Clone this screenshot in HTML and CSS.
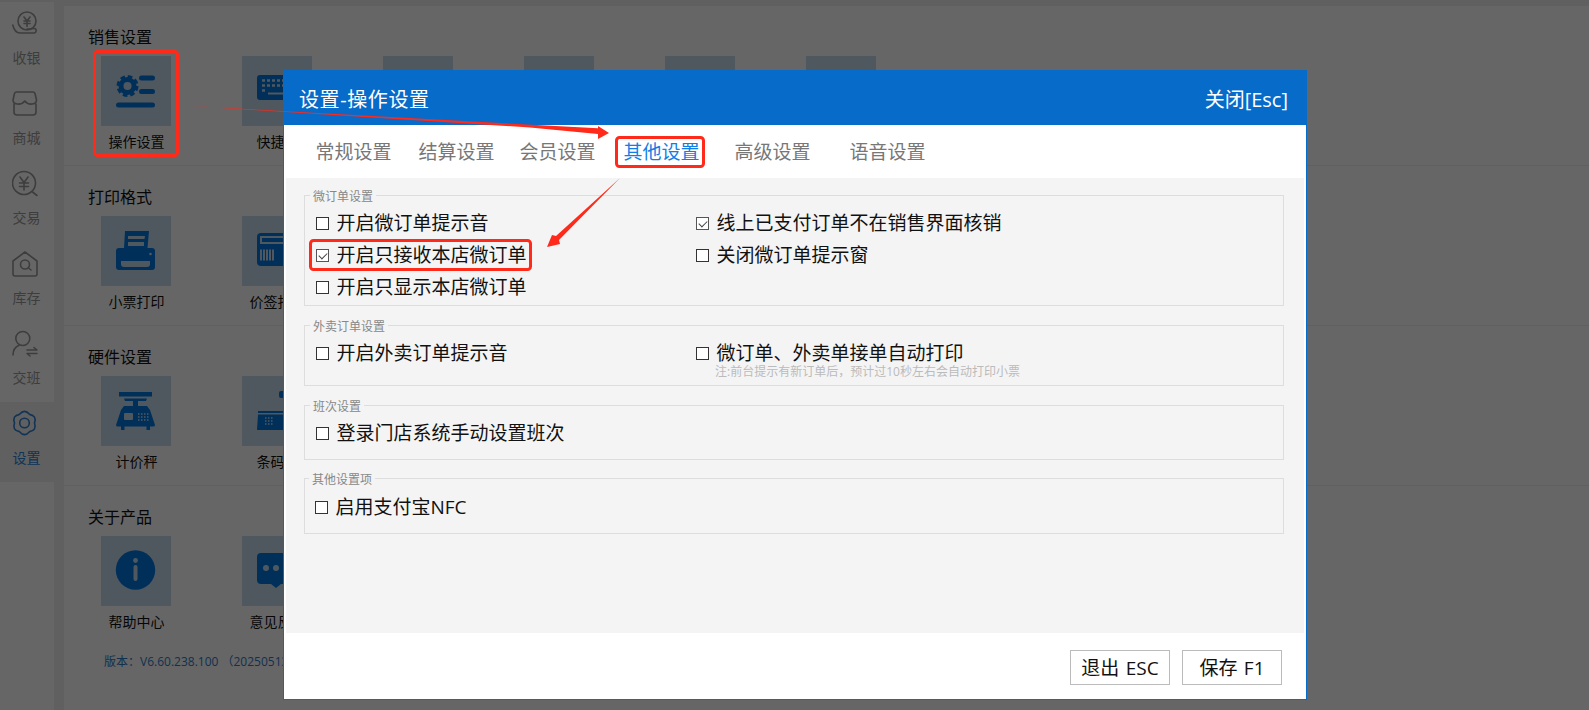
FILE: index.html
```html
<!DOCTYPE html>
<html lang="zh-CN">
<head>
<meta charset="utf-8">
<title>设置-操作设置</title>
<link rel="stylesheet" href="styles.css">
</head>
<body>
<div class="app">
  <nav class="rail">
    <a class="nav-item">
      <svg class="nav-icon" viewBox="0 0 30 30"><circle cx="15" cy="12" r="9"/><path d="M12 8 15 12l3-4M12 12h6M12 14.500h6M15 12v5.500"/><path d="M.8 16C2 21 5 24 8 24H22C24.500 24 25 19.500 22.500 19.500 20 19.500 17.500 20 15 20"/></svg>
      <span>收银</span>
    </a>
    <a class="nav-item">
      <svg class="nav-icon" viewBox="0 0 30 30"><path d="M4.500 3H21Q22.500 3 23 4.500L24.500 11C24.500 16 16 16.500 12.800 12 9.500 16.500 1 16 1 11L2.500 4.500Q3 3 4.500 3Z"/><path d="M2 15V23Q2 26 5 26H21Q24 26 24 23V15"/></svg>
      <span>商城</span>
    </a>
    <a class="nav-item">
      <svg class="nav-icon" viewBox="0 0 30 30"><circle cx="12" cy="14" r="11.500"/><path d="M20.500 23 25 26.500M8 8l4 5.500L16 8M7.500 14h9M7.500 17.500h9M12 13.500V21"/></svg>
      <span>交易</span>
    </a>
    <a class="nav-item">
      <svg class="nav-icon" viewBox="0 0 30 30"><path d="M13 3 25 12V25Q25 27 23 27H3Q1 27 1 25V12Z"/><circle cx="13" cy="15.500" r="4.500"/><path d="M16.500 19 19 21"/></svg>
      <span>库存</span>
    </a>
    <a class="nav-item">
      <svg class="nav-icon" viewBox="0 0 30 30"><circle cx="10.800" cy="9.500" r="7"/><path d="M1 26C1 20 4 17.500 7 16.200M15 21H25L22 18.500M25 24.500H15L18 27"/></svg>
      <span>交班</span>
    </a>
    <a class="nav-item nav-item-active">
      <svg class="nav-icon" viewBox="0 0 30 30"><path d="M7.500 5.340Q12.500-.5 17.500 5.340 25 6.750 22.500 14 25 21.250 17.500 22.660 12.500 28.500 7.500 22.660 0 21.250 2.500 14 0 6.750 7.500 5.340Z"/><circle cx="12.500" cy="14" r="4.800"/></svg>
      <span>设置</span>
    </a>
  </nav>

  <main class="main">
    <section class="group">
      <h2 class="group-title">销售设置</h2>
      <div class="tiles">
        <div class="tile">
          <div class="tile-box">
            <svg class="tile-icon" viewBox="0 0 70 70"><circle class="stroke-thin" cx="26.500" cy="30" r="9.500" stroke-dasharray="4.600 2.860"/><circle class="stroke-main" cx="26.500" cy="30" r="6.500"/><path class="stroke-bar" d="M40.500 22H51.500M40.500 35.500H51.500M17.500 49H51.500"/></svg>
          </div>
          <span class="tile-label">操作设置</span>
        </div>
        <div class="tile">
          <div class="tile-box">
            <svg class="tile-icon" viewBox="0 0 70 70"><rect class="fill-main" x="15" y="19" width="39" height="25" rx="3"/><path class="cut-dots" d="M20 24.500H49M20 29.500H49M20 34.500H23"/><path class="cut-line" d="M26 37.500H48"/></svg>
          </div>
          <span class="tile-label">快捷键</span>
        </div>
        <div class="tile"><div class="tile-box"></div></div>
        <div class="tile"><div class="tile-box"></div></div>
        <div class="tile"><div class="tile-box"></div></div>
        <div class="tile"><div class="tile-box"></div></div>
      </div>
    </section>

    <section class="group">
      <h2 class="group-title">打印格式</h2>
      <div class="tiles">
        <div class="tile">
          <div class="tile-box">
            <svg class="tile-icon" viewBox="0 0 70 70"><path class="fill-main" d="M24 15H48L46.500 32H23Z"/><path class="cut-solid" d="M27 20H44L43.500 23H27ZM27 26H43V30H27Z"/><rect class="fill-main" x="15" y="32" width="39" height="22" rx="3"/><path class="cut-solid" d="M20 45H49V48Q49 51 46 51H23Q20 51 20 48Z"/><circle class="cut-solid" cx="49.500" cy="38" r="1.300"/></svg>
          </div>
          <span class="tile-label">小票打印</span>
        </div>
        <div class="tile">
          <div class="tile-box">
            <svg class="tile-icon" viewBox="0 0 70 70"><rect class="fill-main" x="15" y="17" width="39" height="33" rx="4"/><path class="cut-solid" d="M18 20H51V28H18Z"/><path class="fill-main" d="M20 22H49V26H20Z"/><path class="cut-bars" d="M18 39H33"/></svg>
          </div>
          <span class="tile-label">价签打印</span>
        </div>
      </div>
    </section>

    <section class="group">
      <h2 class="group-title">硬件设置</h2>
      <div class="tiles">
        <div class="tile">
          <div class="tile-box">
            <svg class="tile-icon" viewBox="0 0 70 70"><path class="fill-main" d="M18 16H51V20.500H18ZM23 22.500H46L45 25H37V30H46L49 34 54 49Q54 50.500 52 50.500H49V54H45.500V50.500H23.500V54H20V50.500H17Q15 50.500 15 49L20 34 23 30H32V25H24Z"/><rect class="cut-solid" x="23" y="37" width="9" height="7" rx="1"/><path class="cut-dots-small" d="M37 38H48M37 41H48M37 44H48"/></svg>
          </div>
          <span class="tile-label">计价秤</span>
        </div>
        <div class="tile">
          <div class="tile-box">
            <svg class="tile-icon" viewBox="0 0 70 70"><path class="fill-main" d="M16 35H41V37H16ZM16 38.500H41V54H15Z"/><rect class="fill-main" x="37" y="15" width="8" height="7" rx="2"/><path class="cut-dots-small" d="M23 42H31M23 45H31M23 48H31"/></svg>
          </div>
          <span class="tile-label">条码秤</span>
        </div>
      </div>
    </section>

    <section class="group group-last">
      <h2 class="group-title">关于产品</h2>
      <div class="tiles">
        <div class="tile">
          <div class="tile-box">
            <svg class="tile-icon" viewBox="0 0 70 70"><circle class="fill-main" cx="34.500" cy="34" r="19.700"/><circle class="cut-solid" cx="34.500" cy="24.500" r="2.400"/><path class="cut-stem" d="M34.500 31V43"/></svg>
          </div>
          <span class="tile-label">帮助中心</span>
        </div>
        <div class="tile">
          <div class="tile-box">
            <svg class="tile-icon" viewBox="0 0 70 70"><path class="fill-main" d="M19 17H50Q54 17 54 21V44Q54 48 50 48H39L34 52 29 48H19Q15 48 15 44V21Q15 17 19 17Z"/><circle class="cut-solid" cx="24" cy="32" r="3"/><circle class="cut-solid" cx="34" cy="32" r="3"/><circle class="cut-solid" cx="44" cy="32" r="3"/></svg>
          </div>
          <span class="tile-label">意见反馈</span>
        </div>
      </div>
      <p class="version">版本：V6.60.238.100 （20250513）</p>
    </section>
  </main>
</div>

<div class="overlay"></div>

<div class="modal">
  <header class="modal-head">
    <span class="modal-title">设置-操作设置</span>
    <span class="modal-close">关闭[Esc]</span>
  </header>
  <div class="tabs">
    <span class="tab">常规设置</span>
    <span class="tab tab-b">结算设置</span>
    <span class="tab tab-c">会员设置</span>
    <span class="tab tab-d tab-active">其他设置</span>
    <span class="tab tab-e">高级设置</span>
    <span class="tab tab-f">语音设置</span>
  </div>
  <div class="panel">
    <fieldset class="field">
      <legend class="field-legend">微订单设置</legend>
      <div class="opts">
        <label class="opt"><i class="cb"></i>开启微订单提示音</label>
        <label class="opt"><i class="cb cb-on"></i>线上已支付订单不在销售界面核销</label>
        <label class="opt"><i class="cb cb-on"></i>开启只接收本店微订单</label>
        <label class="opt"><i class="cb"></i>关闭微订单提示窗</label>
        <label class="opt"><i class="cb"></i>开启只显示本店微订单</label>
      </div>
    </fieldset>
    <fieldset class="field field-2">
      <legend class="field-legend">外卖订单设置</legend>
      <div class="opts opts-hinted">
        <label class="opt"><i class="cb"></i>开启外卖订单提示音</label>
        <label class="opt"><i class="cb"></i>微订单、外卖单接单自动打印</label>
        <p class="hint">注:前台提示有新订单后，预计过10秒左右会自动打印小票</p>
      </div>
    </fieldset>
    <fieldset class="field field-3">
      <legend class="field-legend">班次设置</legend>
      <div class="opts">
        <label class="opt"><i class="cb"></i>登录门店系统手动设置班次</label>
      </div>
    </fieldset>
    <fieldset class="field field-4">
      <legend class="field-legend">其他设置项</legend>
      <div class="opts">
        <label class="opt"><i class="cb"></i>启用支付宝NFC</label>
      </div>
    </fieldset>
  </div>
  <footer class="modal-foot">
    <button class="btn">退出 ESC</button>
    <button class="btn">保存 F1</button>
  </footer>
</div>

<svg class="marks" viewBox="0 0 1589 710">
  <rect class="mark-box" x="94.500" y="51.500" width="83" height="104" rx="3"/>
  <rect class="mark-box" x="616.500" y="137.500" width="87" height="29" rx="3"/>
  <rect class="mark-box" x="310.500" y="240.500" width="220" height="29" rx="3"/>
  <path class="mark-arrow" d="M190 106 598 128.300 598 126 609 133 598 139 598 134 530 127.500Z"/>
  <path class="mark-arrow" d="M620 178 556 236 552 235 547 247 560 244 559 240Z"/>
</svg>
</body>
</html>
```
FILE: styles.css
```css
* { box-sizing: border-box; }
html, body { margin: 0; height: 100%; overflow: hidden; }
body {
  width: 1589px;
  height: 710px;
  position: relative;
  font-family: "Open Sans", "Noto Sans CJK SC", sans-serif;
  color: #111;
  background: #f0f0f0;
}
.app { display: flex; height: 710px; }

/* left rail */
.rail {
  width: 64px;
  flex: none;
  padding-top: 2px;
  background: #f0f0f0;
  display: flex;
  flex-direction: column;
  position: relative;
}
.rail::after {
  content: "";
  position: absolute;
  left: 0;
  top: 482px;
  bottom: 0;
  width: 54px;
  background: #fff;
}
.nav-item {
  width: 54px;
  height: 80px;
  background: #fff;
  display: flex;
  flex-direction: column;
  align-items: center;
  color: #999;
  font-size: 14px;
  line-height: 20px;
  padding: 7px 1px 0 0;
}
.nav-item span { margin-top: 9px; }
.nav-item-active { width: 64px; background: #f0f0f0; color: #2a7fd6; padding-right: 11px; }
.nav-icon {
  width: 30px;
  height: 30px;
  flex: none;
  margin-left: 1px;
  fill: none;
  stroke: currentColor;
  stroke-width: 1.600;
  stroke-linecap: round;
  stroke-linejoin: round;
}

/* main canvas */
.main {
  flex: 1;
  margin-top: 6px;
  background: #fff;
  min-width: 0;
}
.group {
  height: 160px;
  padding: 20px 0 0 24px;
  border-bottom: 1px solid #f0f0f0;
}
.group-last { border-bottom: 0; }
.group-title {
  margin: 0 0 8px;
  font-size: 16px;
  font-weight: 400;
  line-height: 22px;
  color: #111;
}
.tiles { display: flex; gap: 71px; padding-left: 13px; }
.tile { width: 70px; display: flex; flex-direction: column; align-items: center; }
.tile-box { width: 70px; height: 70px; background: #c8dbee; }
.tile-icon { display: block; width: 70px; height: 70px; }
.tile-label {
  margin: 6px 0 0 1px;
  font-size: 14px;
  line-height: 20px;
  white-space: nowrap;
  color: #111;
}
.fill-main { fill: #0078e0; }
.stroke-main { fill: none; stroke: #0078e0; stroke-width: 5; }
.stroke-thin { fill: none; stroke: #0078e0; stroke-width: 3; }
.stroke-bar { fill: none; stroke: #0078e0; stroke-width: 5; stroke-linecap: round; }
.cut-solid { fill: #c8dbee; }
.cut-dots { fill: none; stroke: #c8dbee; stroke-width: 2.500; stroke-dasharray: 3 2; }
.cut-line { fill: none; stroke: #c8dbee; stroke-width: 2; }
.cut-bars { fill: none; stroke: #c8dbee; stroke-width: 11; stroke-dasharray: 2 1; }
.cut-dots-small { fill: none; stroke: #c8dbee; stroke-width: 1.500; stroke-dasharray: 1.500 1.500; }
.cut-stem { fill: none; stroke: #c8dbee; stroke-width: 4; stroke-linecap: round; }
.version {
  margin: 21px 0 0 16px;
  font-size: 12px;
  line-height: 18px;
  color: #2f7bc4;
  white-space: nowrap;
}

/* dim layer */
.overlay {
  position: absolute;
  inset: 0;
  background: rgba(0, 0, 0, .6);
}

/* dialog */
.modal {
  position: absolute;
  left: 283px;
  top: 70px;
  width: 1024px;
  height: 630px;
  background: #fff;
  border: 1px solid #076bc9;
  display: flex;
  flex-direction: column;
}
.modal-head {
  height: 54px;
  flex: none;
  background: #076bc9;
  color: #fff;
  display: flex;
  align-items: center;
  justify-content: space-between;
  padding: 3px 18px 0 15px;
}
.modal-title { font-size: 20px; line-height: 28px; letter-spacing: .6px; }
.modal-close { font-size: 20px; line-height: 28px; }
.tabs {
  height: 53px;
  flex: none;
  display: flex;
  align-items: center;
  padding: 0 0 0 31.500px;
  font-size: 19px;
  color: #777;
}
.tab { line-height: 28px; white-space: nowrap; }
.tab-b { margin-left: 27px; }
.tab-c { margin-left: 25px; }
.tab-d { margin-left: 28px; }
.tab-e { margin-left: 35px; }
.tab-f { margin-left: 39px; }
.tab-active { color: #0f7ee6; }
.panel {
  flex: 1;
  margin: 0 2px;
  padding: 9px 20px 0 18px;
  background: #f4f4f4;
}
.field {
  margin: 0;
  min-width: 0;
  padding: 3px 11px 2px 11px;
  border: 1px solid #ddd;
}
.field-2 { margin-top: 11px; padding-bottom: 7px; }
.field-3 { margin-top: 11px; padding-bottom: 10px; }
.field-4 { margin-top: 10px; padding: 4px 11px 10px 10px; }
.field-legend {
  margin-left: -6px;
  padding: 3px 3px 0;
  font-size: 12px;
  line-height: 14px;
  color: #888;
}
.opts { display: grid; grid-template-columns: 380px 1fr; grid-auto-rows: 32px; }
.opts-hinted { grid-template-rows: 32px 9px; }
.opt {
  display: flex;
  align-items: center;
  font-size: 19px;
  line-height: 28px;
  color: #111;
  white-space: nowrap;
}
.cb {
  position: relative;
  width: 13px;
  height: 13px;
  flex: none;
  margin-right: 7.500px;
  background: #fff;
  border: 1px solid #333;
}
.cb-on { border-color: #555; }
.cb-on::after {
  content: "";
  position: absolute;
  left: 2px;
  top: 1px;
  width: 7px;
  height: 4px;
  border-left: 1.500px solid #444;
  border-bottom: 1.500px solid #444;
  transform: rotate(-45deg) translate(-1px, 1px);
}
.hint {
  grid-column: 2;
  margin: -3px 0 0 19px;
  height: 12px;
  font-size: 12px;
  line-height: 12px;
  color: #bbb;
  white-space: nowrap;
}
.modal-foot {
  height: 66px;
  flex: none;
  display: flex;
  justify-content: flex-end;
  gap: 12px;
  padding: 17px 24px 0 0;
}
.btn {
  width: 100px;
  height: 35px;
  padding: 0;
  border: 1px solid #bbb;
  background: #fff;
  color: #111;
  font: 400 19px/28px "Open Sans", "Noto Sans CJK SC", sans-serif;
  word-spacing: 1.500px;
}

/* red annotations */
.marks { position: absolute; left: 0; top: 0; width: 1589px; height: 710px; pointer-events: none; }
.mark-box { fill: none; stroke: #ff2a1a; stroke-width: 3; }
.mark-arrow { fill: #ff2a1a; }
```
